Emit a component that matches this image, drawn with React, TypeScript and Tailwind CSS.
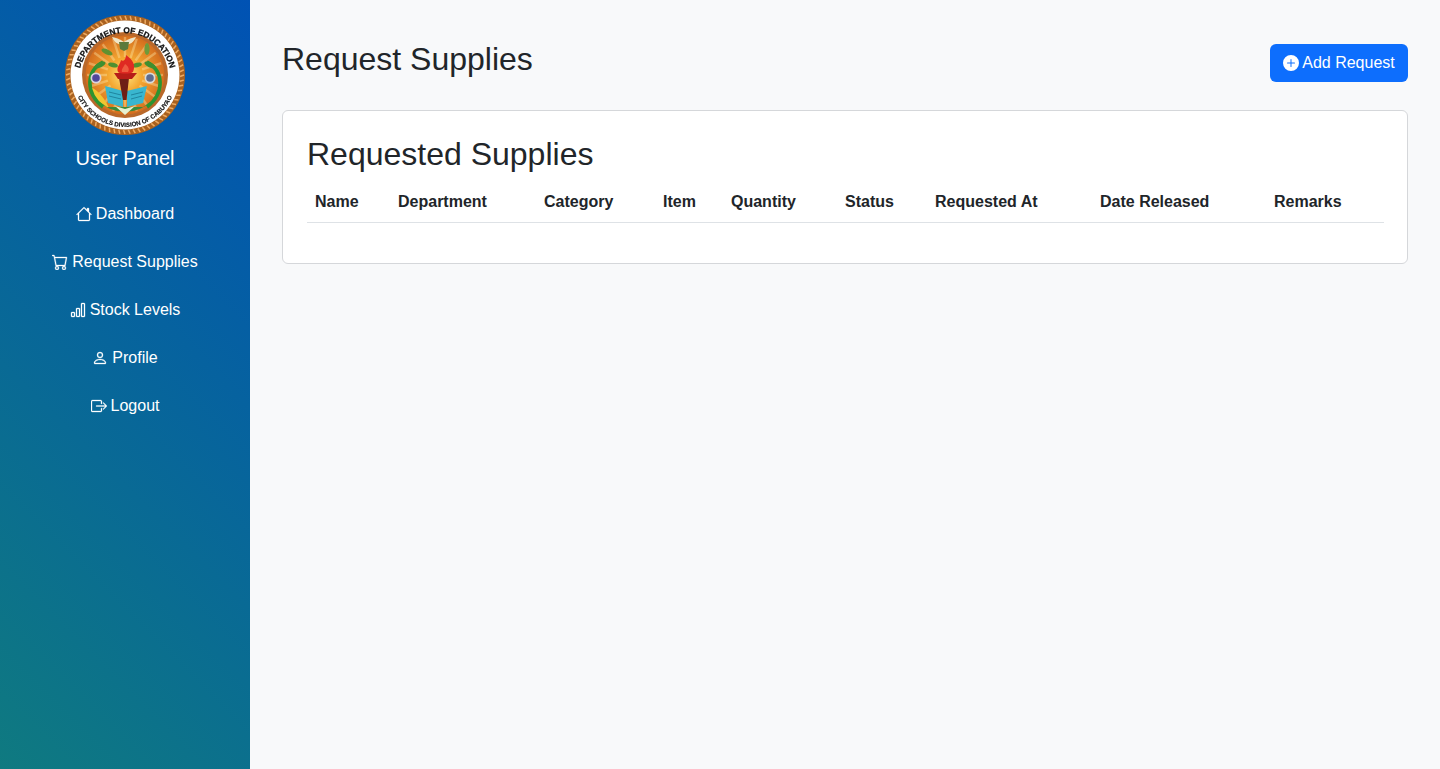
import { BsHouse, BsCart, BsBarChart, BsPerson, BsBoxArrowRight, BsPlusCircleFill } from "react-icons/bs";

const navItems = [
  { label: "Dashboard", icon: BsHouse },
  { label: "Request Supplies", icon: BsCart },
  { label: "Stock Levels", icon: BsBarChart },
  { label: "Profile", icon: BsPerson },
  { label: "Logout", icon: BsBoxArrowRight },
];

const columns = [
  { label: "Name", width: "w-[83px]" },
  { label: "Department", width: "w-[146px]" },
  { label: "Category", width: "w-[119px]" },
  { label: "Item", width: "w-[68px]" },
  { label: "Quantity", width: "w-[114px]" },
  { label: "Status", width: "w-[90px]" },
  { label: "Requested At", width: "w-[165px]" },
  { label: "Date Released", width: "w-[174px]" },
  { label: "Remarks", width: "w-[118px]" },
];

const rays = Array.from({ length: 20 }, (_, i) => i * 18);
const rope = Array.from({ length: 72 }, (_, i) => i * 5);

function Logo() {
  return (
    <svg viewBox="0 0 120 120" className="h-[120px] w-[120px] blur-[0.3px]">
      <defs>
        <radialGradient id="sun" cx="50%" cy="50%" r="52%">
          <stop offset="0%" stopColor="#ffe680" />
          <stop offset="40%" stopColor="#f4a832" />
          <stop offset="100%" stopColor="#d2691c" />
        </radialGradient>
        <path id="topArc" d="M 14 64 A 46 46 0 0 1 106 64" />
        <path id="bottomArc" d="M 8 60 A 52 52 0 0 0 112 60" />
      </defs>
      <circle cx="60" cy="60" r="60" fill="#a9611f" />
      <g stroke="#eeaa62" strokeWidth="1.5">
        {rope.map((a) => (
          <line key={a} x1="60" y1="1" x2="61.5" y2="5" transform={`rotate(${a} 60 60)`} />
        ))}
      </g>
      <circle cx="60" cy="60" r="54.5" fill="#ffffff" />
      <circle cx="60" cy="60" r="43" fill="#b9682a" />
      <circle cx="60" cy="60" r="39.5" fill="url(#sun)" />
      <g stroke="#fff3b8" strokeWidth="2.4" opacity="0.35">
        {rays.map((a) => (
          <line key={a} x1="60" y1="42" x2="60" y2="22" transform={`rotate(${a} 60 60)`} />
        ))}
      </g>
      {/* gold hills and rim at the bottom */}
      <path d="M 26 72 C 34 76 40 84 44 93 C 36 90 29 84 26 72 Z" fill="#f2c530" />
      <path d="M 32 85 A 39 39 0 0 0 88 85 L 78 92 L 42 92 Z" fill="#3b8a3a" />
      {/* vines */}
      <path d="M 38 47 C 21 56 20 78 38 92" fill="none" stroke="#2c9430" strokeWidth="3.6" />
      <path d="M 82 47 C 99 56 100 78 82 92" fill="none" stroke="#2c9430" strokeWidth="3.6" />
      <ellipse cx="42" cy="37" rx="6" ry="2.6" fill="#5f9130" transform="rotate(25 42 37)" />
      <ellipse cx="35" cy="50" rx="6" ry="2.6" fill="#3f8f30" transform="rotate(-25 35 50)" />
      <ellipse cx="48" cy="50" rx="5" ry="2.2" fill="#4f9030" transform="rotate(15 48 50)" />
      <ellipse cx="82" cy="34" rx="2.6" ry="6" fill="#6e9a3a" />
      <ellipse cx="85" cy="50" rx="6" ry="2.6" fill="#3f8f30" transform="rotate(25 85 50)" />
      <ellipse cx="72" cy="50" rx="5" ry="2.2" fill="#4f9030" transform="rotate(-15 72 50)" />
      {/* seals */}
      <circle cx="31" cy="63" r="5.5" fill="#d9d4dc" />
      <circle cx="31" cy="63" r="3.8" fill="#51479a" />
      <circle cx="85" cy="63" r="5.5" fill="#d8dbd8" />
      <circle cx="85" cy="63" r="3.8" fill="#5d6c90" />
      {/* eagle and shield */}
      <path d="M 47 22 C 53 23 56 25 59 27 C 62 25 65 23 71 22 C 69 27 65 30 59 30 C 53 30 49 27 47 22 Z" fill="#efe6c8" />
      <path d="M 54 27 L 64 27 L 63 34 L 59 36 L 55 34 Z" fill="#5d7a3c" />
      {/* books */}
      <path d="M 58 76 L 40 71 L 43 88 L 58 92 Z" fill="#39b6cf" />
      <path d="M 62 76 L 82 71 L 78 88 L 62 92 Z" fill="#39b6cf" />
      <path d="M 44 77 L 56 80 M 44 81 L 56 84 M 66 80 L 78 77 M 66 84 L 77 81" stroke="#1c7f9a" strokeWidth="0.9" />
      <path d="M 50 91 L 60 100 L 70 91 L 60 94 Z" fill="#e6f0d0" />
      {/* torch */}
      <path d="M 54 63 L 64 63 L 61.5 85 L 58 85 Z" fill="#6e1e16" />
      <path d="M 49 58 L 72 58 L 67 64 L 53 64 Z" fill="#b61d18" />
      <path d="M 61 40 C 68 45 71 50 68 57 C 66 59 55 59 53 57 C 51 52 55 50 56 45 C 58 47 61 45 61 40 Z" fill="#df2a22" />
      <path d="M 60 49 C 63 51 65 54 63 57 L 57 57 C 56 54 59 52 60 49 Z" fill="#ee5b40" />
      {/* ring text */}
      <text fill="#111111" stroke="#111111" strokeWidth="0.25" fontSize="8.4" fontWeight="700" fontFamily="'Liberation Sans', sans-serif">
        <textPath href="#topArc" startOffset="50%" textAnchor="middle">DEPARTMENT OF EDUCATION</textPath>
      </text>
      <text fill="#111111" stroke="#111111" strokeWidth="0.15" fontSize="6.2" fontWeight="700" fontFamily="'Liberation Sans', sans-serif">
        <textPath href="#bottomArc" startOffset="50%" textAnchor="middle">CITY SCHOOLS DIVISION OF CABUYAO</textPath>
      </text>
    </svg>
  );
}

export default function App() {
  return (
    <div className="flex h-[769px] overflow-hidden bg-[#f8f9fa] font-['Liberation_Sans',Arial,sans-serif] text-[#212529]">
      <aside className="w-[250px] shrink-0 bg-[linear-gradient(225deg,#0052b4,#0f7a80)] pt-[15px] text-white">
        <div className="flex justify-center">
          <Logo />
        </div>
        <h4 className="mt-[11px] text-center text-[20px] leading-[24px]">User Panel</h4>
        <nav className="mt-[20px] flex flex-col">
          {navItems.map(({ label, icon: Icon }) => (
            <a key={label} className="flex h-[48px] items-center justify-center gap-[4px] text-[16px]">
              <Icon className="h-4 w-4 stroke-current stroke-[0.3]" />
              {label}
            </a>
          ))}
        </nav>
      </aside>

      <main className="min-w-0 flex-1 px-8 pt-[40px]">
        <div className="flex items-start justify-between">
          <h2 className="text-[32px] leading-[38px]">Request Supplies</h2>
          <button className="mt-[4px] flex h-[38px] w-[138px] items-center justify-center gap-[3px] rounded-md bg-[#0d6efd] text-[16px] text-white">
            <BsPlusCircleFill className="h-4 w-4" />
            Add Request
          </button>
        </div>

        <section className="mt-[28px] h-[154px] rounded-md border border-[#d5d7da] bg-white px-6 pt-6">
          <h3 className="text-[32px] leading-[38px]">Requested Supplies</h3>
          <table className="mt-[9px] w-full table-fixed text-left text-[16px]">
            <thead>
              <tr className="border-b border-[#dee2e6]">
                {columns.map((c) => (
                  <th key={c.label} className={`${c.width} px-2 py-2 font-bold leading-[24px]`}>
                    {c.label}
                  </th>
                ))}
              </tr>
            </thead>
          </table>
        </section>
      </main>
    </div>
  );
}
